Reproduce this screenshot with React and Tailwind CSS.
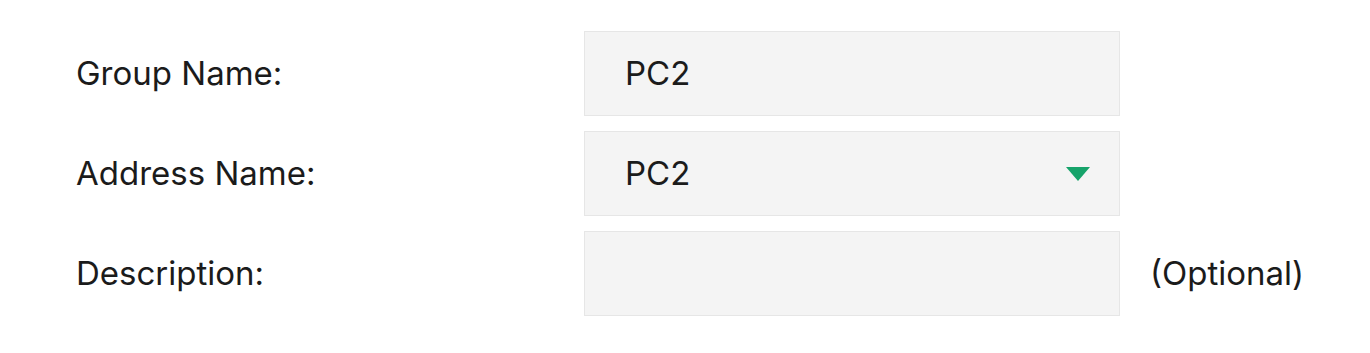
import React from "react";

const Row = ({ label, children, extra }) => (
  <div className="flex items-center">
    <div className="w-[508px] text-[33px] text-[#1b1b1b]">{label}</div>
    <div className="flex h-[85px] w-[536px] items-center border border-[#e6e6e6] bg-[#f4f4f4] pl-[40px] pr-[28px] text-[33px] text-[#1b1b1b]">
      {children}
    </div>
    {extra && <div className="ml-[30px] text-[33px] text-[#1b1b1b]">{extra}</div>}
  </div>
);

export default function App() {
  return (
    <div
      className="flex min-h-screen flex-col gap-[15px] bg-white pl-[76px] pt-[31px]"
      style={{ fontFamily: 'Inter, "Noto Sans", sans-serif' }}
    >
      <Row label="Group Name:">
        <span>PC2</span>
      </Row>
      <Row label="Address Name:">
        <span className="flex-1">PC2</span>
        <svg width="26" height="16" viewBox="0 0 26 16">
          <path d="M1 1 H25 L13 15 Z" fill="#16a36a" />
        </svg>
      </Row>
      <Row label="Description:" extra="(Optional)" />
    </div>
  );
}
